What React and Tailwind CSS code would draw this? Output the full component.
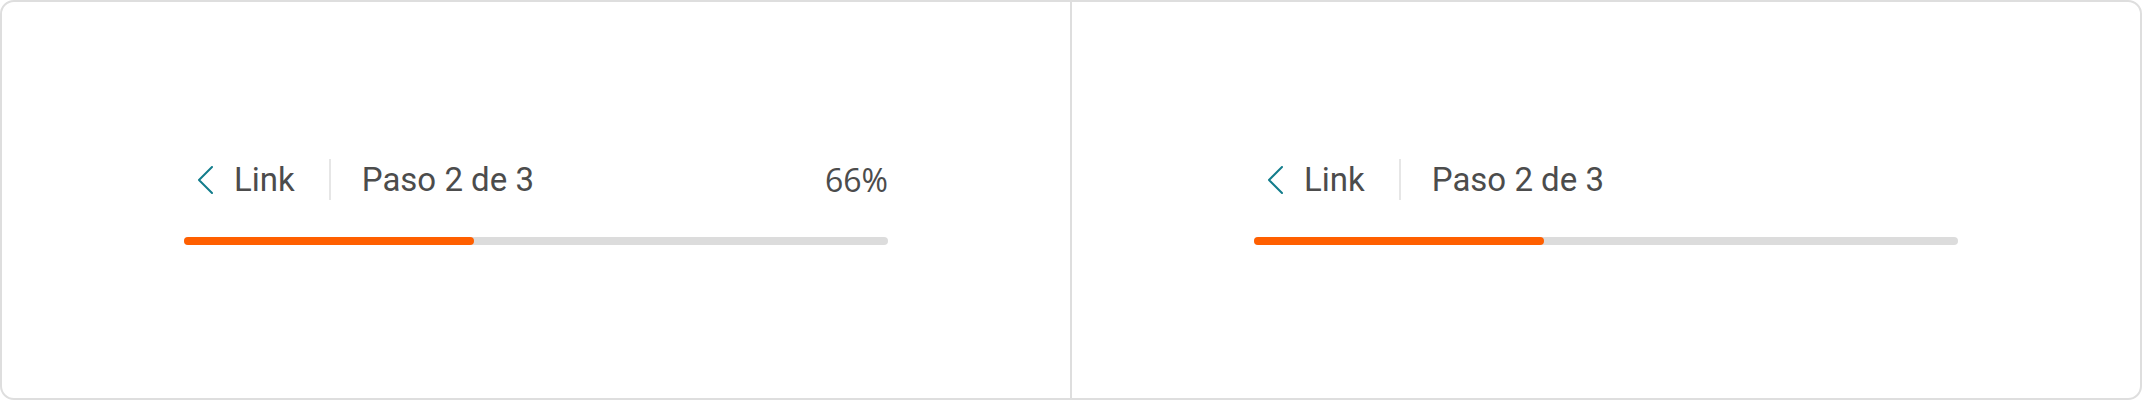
const roboto = { fontFamily: "Roboto, 'Liberation Sans', sans-serif" };

function Chevron() {
  return (
    <svg width="16" height="28" viewBox="0 0 16 28" fill="none" className="shrink-0">
      <polyline points="15,1 2,14 15,27" stroke="#137d8c" strokeWidth="2" strokeLinecap="round" strokeLinejoin="round" />
    </svg>
  );
}

function StepPanel({ showPercent }) {
  return (
    <div className="flex h-full flex-col items-center justify-center">
      <div className="w-[704px] pt-[4px]">
        <div className="flex h-[41px] items-center pl-[13px] text-[33px] leading-none text-[#4c4c4c]">
          <Chevron />
          <a href="#" className="ml-[21px] font-[Roboto,'Liberation_Sans',sans-serif]">
            Link
          </a>
          <div className="ml-[34px] h-[41px] w-[2px] bg-[#e6e6e6]" />
          <span className="ml-[31px] font-[Roboto,'Liberation_Sans',sans-serif]">Paso 2 de 3</span>
          {showPercent && (
            <span className="ml-auto text-[32px] font-['Open_Sans','Noto_Sans',sans-serif]">66%</span>
          )}
        </div>
        <div className="mt-[37px] h-2 w-full rounded-full bg-[#dcdcdc]">
          <div className="h-2 w-[290px] rounded-full bg-[#ff5f00]" />
        </div>
      </div>
    </div>
  );
}

export default function App() {
  return (
    <div className="h-[400px] w-[2142px] bg-white" style={roboto}>
      <div className="grid h-full grid-cols-[1fr_2px_1fr] rounded-[14px] border-2 border-[#dedede]">
        <StepPanel showPercent />
        <div className="bg-[#dedede]" />
        <StepPanel />
      </div>
    </div>
  );
}
